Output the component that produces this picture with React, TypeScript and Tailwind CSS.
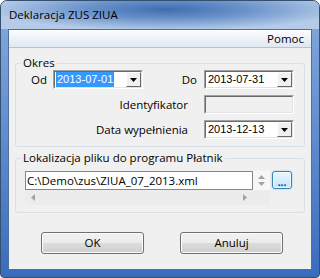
import React from 'react';

const ui = "font-['Segoe_UI','Open_Sans',sans-serif]";

const Sunken = ({ className = '', children }: { className?: string; children?: React.ReactNode }) => (
  <div className={`border border-t-[#a0a0a0] border-l-[#a0a0a0] border-b-white border-r-white ${className}`}>
    <div className="h-full border border-t-[#696969] border-l-[#696969] border-b-[#e3e3e3] border-r-[#e3e3e3]">{children}</div>
  </div>
);

const Combo = ({ value, selected }: { value: string; selected?: boolean }) => (
  <Sunken className="w-[90px] h-[19px]">
    <div className="flex h-full bg-white">
      <div className="flex-1 flex items-center pl-[1px] font-['Liberation_Sans',sans-serif] text-[11px]">
        <span className={selected ? 'bg-[#3399ff] text-white px-[1px] leading-[15px]' : 'px-[1px] text-black'}>{value}</span>
      </div>
      <div className="w-[15px] h-full bg-[#f0f0f0] border border-t-white border-l-white border-b-[#696969] border-r-[#696969] flex items-center justify-center">
        <svg width="7" height="4" viewBox="0 0 7 4">
          <path d="M0 0h7L3.5 4z" fill="#000" />
        </svg>
      </div>
    </div>
  </Sunken>
);

const Legend = ({ children }: { children: React.ReactNode }) => (
  <legend className="ml-[5px] px-[2px] text-[11.5px] leading-[14px] text-black">{children}</legend>
);

const Button = ({ label }: { label: string }) => (
  <button className="w-[103px] h-[22px] rounded-[3px] border border-[#707070] bg-[linear-gradient(#f2f2f2_0%,#ebebeb_50%,#dddddd_50%,#cfcfcf_100%)] shadow-[inset_0_0_0_1px_#fcfcfc] text-[11.5px] text-black">
    {label}
  </button>
);

export default function App() {
  return (
    <div className={`${ui} w-[320px] h-[278px] flex flex-col rounded-t-[7px] rounded-b-[4px] border border-[#34506f] bg-linear-to-b from-[#86aadc] to-[#3a6cbd] overflow-hidden`}>
      <div className="h-[28px] shrink-0 flex items-center pl-[8px] bg-[radial-gradient(ellipse_at_52%_30%,#3e6db0_0%,#6b93cb_35%,#b5cbe8_75%)] text-[11.5px] text-black">
        Deklaracja ZUS ZIUA
      </div>
      <div className="flex-1 mx-[7px] mb-[7px] flex flex-col border border-[#4f6f9e] bg-[#f0f0f0]">
        <div className="h-[18px] shrink-0 flex items-center justify-end pr-[7px] border-b border-[#b6c3d4] bg-linear-to-b from-[#fdfdfe] to-[#dfe7f1] text-[11.5px] text-black">
          Pomoc
        </div>

        <fieldset className="mx-[6px] mt-[8px] rounded-[3px] border border-[#d5dfe5] pb-[7px] flex flex-col gap-[6px] text-[11.5px] text-black">
          <Legend>Okres</Legend>
          <div className="flex items-center h-[19px]">
            <div className="w-[37px] pl-[15px]">Od</div>
            <Combo value="2013-07-01" selected />
            <div className="w-[61px] pr-[7px] text-right">Do</div>
            <Combo value="2013-07-31" />
          </div>
          <div className="flex items-center h-[19px]">
            <div className="w-[172px] text-right">Identyfikator</div>
            <Sunken className="ml-[16px] w-[90px] h-[19px]">
              <div className="h-full bg-[#f0f0f0]" />
            </Sunken>
          </div>
          <div className="flex items-center h-[19px]">
            <div className="w-[172px] text-right">Data wypełnienia</div>
            <div className="ml-[16px]">
              <Combo value="2013-12-13" />
            </div>
          </div>
        </fieldset>

        <fieldset className="mx-[6px] mt-[4px] rounded-[3px] border border-[#d5dfe5] pt-[6px] pb-[7px]">
          <Legend>Lokalizacja pliku do programu Płatnik</Legend>
          <div className="flex items-start pl-[9px]">
            <div className="grid grid-cols-[228px_17px] grid-rows-[19px_15px]">
              <div className="border border-[#828790] bg-white flex items-center pl-[1px] text-[11.5px] text-black">
                C:\Demo\zus\ZIUA_07_2013.xml
              </div>
              <div className="bg-[#f7f7f7] flex flex-col items-center justify-center gap-[3px]">
                <svg width="7" height="4" viewBox="0 0 7 4"><path d="M3.5 0L7 4H0z" fill="#a3a3a3" /></svg>
                <svg width="7" height="4" viewBox="0 0 7 4"><path d="M0 0h7L3.5 4z" fill="#a3a3a3" /></svg>
              </div>
              <div className="bg-[#ececec] flex items-center justify-between px-[6px]">
                <svg width="4" height="7" viewBox="0 0 4 7"><path d="M4 0v7L0 3.5z" fill="#a3a3a3" /></svg>
                <svg width="4" height="7" viewBox="0 0 4 7"><path d="M0 0v7l4-3.5z" fill="#a3a3a3" /></svg>
              </div>
              <div className="bg-[#ececec]" />
            </div>
            <button className="ml-[2px] w-[20px] h-[18px] rounded-[3px] border border-[#3c7fb1] bg-linear-to-b from-[#eaf6fd] to-[#bee6fd] shadow-[inset_0_0_0_1px_#f4fbfe,0_0_2px_#7fc6f2] flex items-end justify-center pb-[3px]">
              <span className="text-[10px] leading-[6px] font-bold text-[#1e2d5a]">...</span>
            </button>
          </div>
        </fieldset>

        <div className="mt-[19px] flex pl-[32px] gap-[36px]">
          <Button label="OK" />
          <Button label="Anuluj" />
        </div>
      </div>
    </div>
  );
}
